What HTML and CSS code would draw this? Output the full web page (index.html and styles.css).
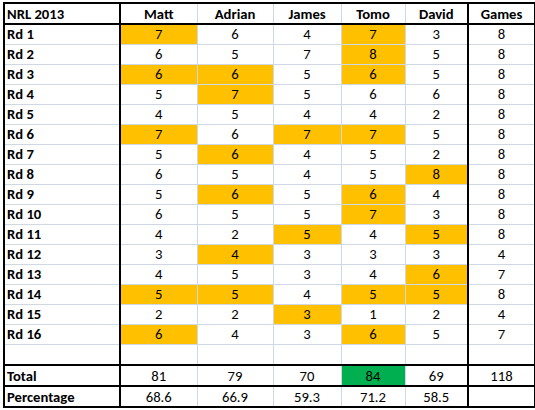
FILE: index.html
```html
<!DOCTYPE html>
<html>
<head>
<meta charset="utf-8">
<link rel="stylesheet" href="styles.css">
</head>
<body>
<table class="sheet">
  <colgroup>
    <col class="c-label"><col class="c-matt"><col class="c-adrian"><col class="c-james"><col class="c-tomo"><col class="c-david"><col class="c-games">
  </colgroup>
  <thead>
    <tr class="head"><th class="lbl">NRL 2013</th><th>Matt</th><th>Adrian</th><th>James</th><th>Tomo</th><th class="last">David</th><th>Games</th></tr>
  </thead>
  <tbody>
    <tr><th class="lbl">Rd 1</th><td class="hi">7</td><td>6</td><td>4</td><td class="hi">7</td><td class="last">3</td><td>8</td></tr>
    <tr><th class="lbl">Rd 2</th><td>6</td><td>5</td><td>7</td><td class="hi">8</td><td class="last">5</td><td>8</td></tr>
    <tr><th class="lbl">Rd 3</th><td class="hi">6</td><td class="hi">6</td><td>5</td><td class="hi">6</td><td class="last">5</td><td>8</td></tr>
    <tr><th class="lbl">Rd 4</th><td>5</td><td class="hi">7</td><td>5</td><td>6</td><td class="last">6</td><td>8</td></tr>
    <tr><th class="lbl">Rd 5</th><td>4</td><td>5</td><td>4</td><td>4</td><td class="last">2</td><td>8</td></tr>
    <tr><th class="lbl">Rd 6</th><td class="hi">7</td><td>6</td><td class="hi">7</td><td class="hi">7</td><td class="last">5</td><td>8</td></tr>
    <tr><th class="lbl">Rd 7</th><td>5</td><td class="hi">6</td><td>4</td><td>5</td><td class="last">2</td><td>8</td></tr>
    <tr><th class="lbl">Rd 8</th><td>6</td><td>5</td><td>4</td><td>5</td><td class="last hi">8</td><td>8</td></tr>
    <tr><th class="lbl">Rd 9</th><td>5</td><td class="hi">6</td><td>5</td><td class="hi">6</td><td class="last">4</td><td>8</td></tr>
    <tr><th class="lbl">Rd 10</th><td>6</td><td>5</td><td>5</td><td class="hi">7</td><td class="last">3</td><td>8</td></tr>
    <tr><th class="lbl">Rd 11</th><td>4</td><td>2</td><td class="hi">5</td><td>4</td><td class="last hi">5</td><td>8</td></tr>
    <tr><th class="lbl">Rd 12</th><td>3</td><td class="hi">4</td><td>3</td><td>3</td><td class="last">3</td><td>4</td></tr>
    <tr><th class="lbl">Rd 13</th><td>4</td><td>5</td><td>3</td><td>4</td><td class="last hi">6</td><td>7</td></tr>
    <tr><th class="lbl">Rd 14</th><td class="hi">5</td><td class="hi">5</td><td>4</td><td class="hi">5</td><td class="last hi">5</td><td>8</td></tr>
    <tr><th class="lbl">Rd 15</th><td>2</td><td>2</td><td class="hi">3</td><td>1</td><td class="last">2</td><td>4</td></tr>
    <tr><th class="lbl">Rd 16</th><td class="hi">6</td><td>4</td><td>3</td><td class="hi">6</td><td class="last">5</td><td>7</td></tr>
    <tr class="blank"><th class="lbl"></th><td></td><td></td><td></td><td></td><td class="last"></td><td></td></tr>
  </tbody>
  <tfoot>
    <tr class="sum"><th class="lbl">Total</th><td>81</td><td>79</td><td>70</td><td class="best">84</td><td class="last">69</td><td>118</td></tr>
    <tr class="sum"><th class="lbl">Percentage</th><td>68.6</td><td>66.9</td><td>59.3</td><td>71.2</td><td class="last">58.5</td><td></td></tr>
  </tfoot>
</table>
</body>
</html>
```
FILE: styles.css
```css
html, body {
  margin: 0;
  padding: 0;
  background: #ffffff;
}

body {
  padding: 2px 0 0 3px;
  font-family: Carlito, "Liberation Sans", Arial, sans-serif;
  font-size: 14.67px;
  color: #000000;
}

.sheet {
  border-collapse: collapse;
  table-layout: fixed;
  width: 531px;
  border: 2px solid #000000;
}

.c-label { width: 116px; }
.c-matt { width: 77px; }
.c-adrian { width: 76px; }
.c-james { width: 68px; }
.c-tomo { width: 64px; }
.c-david { width: 63px; }
.c-games { width: 67px; }

.sheet tr {
  height: 20px;
}

.sheet tr.head {
  height: 21px;
}

.sheet tr.blank {
  height: 21px;
}

.sheet tr.sum {
  height: 21px;
}

.sheet th,
.sheet td {
  padding: 0;
  border: 1px solid #d0d7e5;
  text-align: center;
  font-weight: normal;
  line-height: 18px;
  white-space: nowrap;
  overflow: hidden;
}

.sheet th.lbl {
  text-align: left;
  padding-left: 2px;
  font-weight: bold;
  border-right: 2px solid #000000;
}

.sheet thead th {
  font-weight: bold;
  border-bottom: 2px solid #000000;
}

.sheet .last {
  border-right: 2px solid #000000;
}

.sheet .hi {
  background: #ffc000;
}

.sheet .best {
  background: #00b050;
}

.sheet tr.sum th,
.sheet tr.sum td {
  border-top: 2px solid #000000;
  border-bottom: 2px solid #000000;
}
```
